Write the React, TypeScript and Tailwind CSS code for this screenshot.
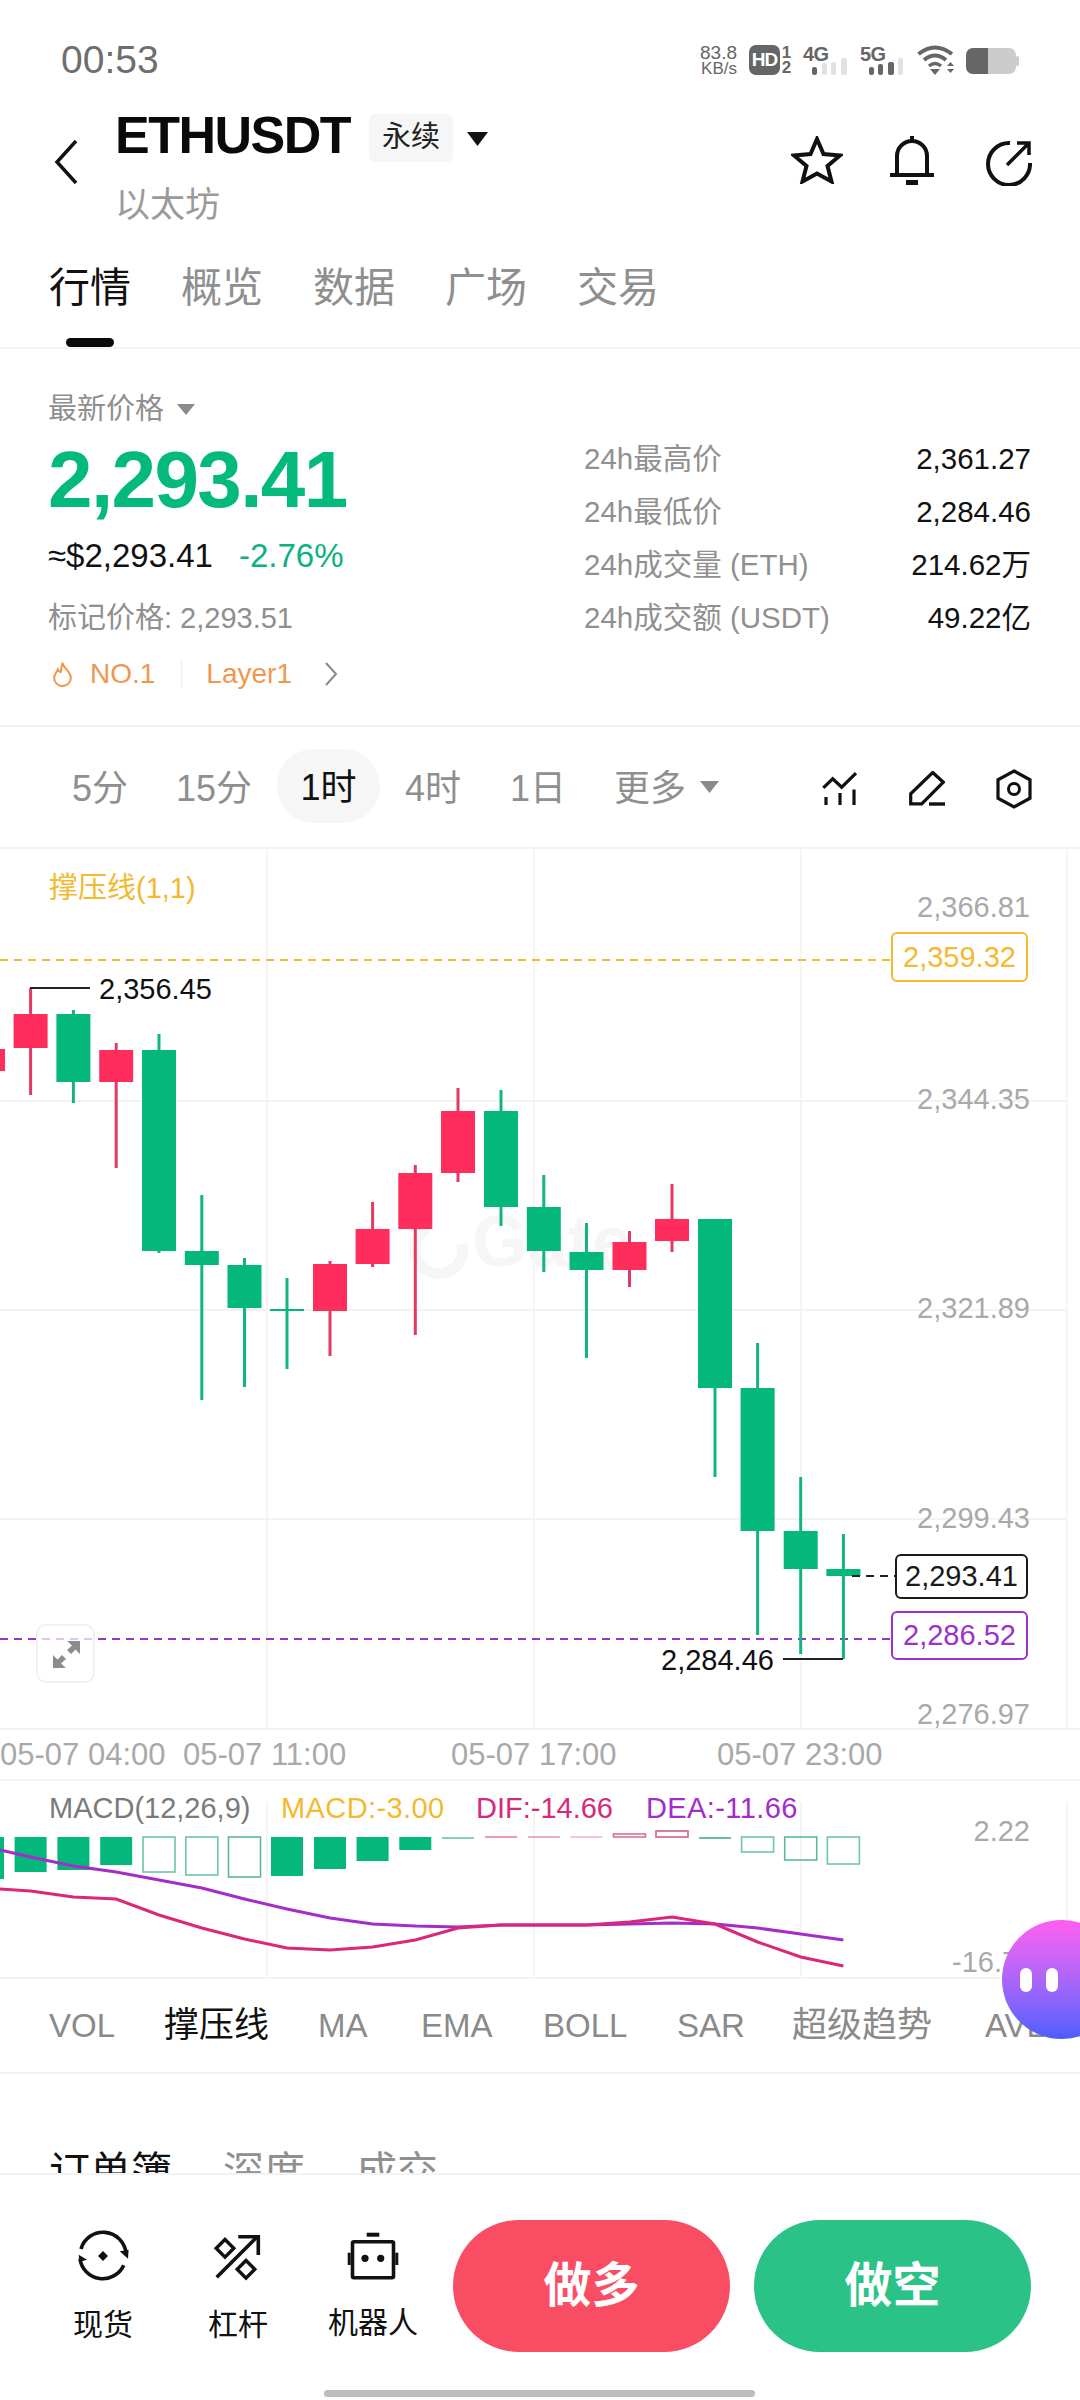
import type { ReactNode } from 'react'

const FONT = '"Liberation Sans","Noto Sans CJK SC",sans-serif'
const GREEN = '#04b87c'
const RED = '#ff2d5b'
const GREEN_WICK = '#12b582'
const RED_WICK = '#e23a63'
const YELLOW = '#f3b92f'

// x center, open top, body bottom, wick top, wick bottom
const xs = [30.6, 73.4, 116.2, 159, 201.8, 244.5, 287, 330, 372.6, 415.3, 458, 501, 543.8, 586.5, 629.5, 672, 715, 757.6, 800.7, 843.4]

const candles: { c: 'g' | 'r'; t: number; b: number; wt: number; wb: number }[] = [
  { c: 'r', t: 1014, b: 1048, wt: 988, wb: 1095 },
  { c: 'g', t: 1014, b: 1082, wt: 1010, wb: 1103 },
  { c: 'r', t: 1050, b: 1082, wt: 1043, wb: 1168 },
  { c: 'g', t: 1050, b: 1251, wt: 1034, wb: 1253 },
  { c: 'g', t: 1251, b: 1265, wt: 1195, wb: 1400 },
  { c: 'g', t: 1265, b: 1308, wt: 1258, wb: 1387 },
  { c: 'g', t: 1309, b: 1311, wt: 1278, wb: 1369 },
  { c: 'r', t: 1264, b: 1311, wt: 1261, wb: 1356 },
  { c: 'r', t: 1229, b: 1264, wt: 1202, wb: 1267 },
  { c: 'r', t: 1173, b: 1229, wt: 1165, wb: 1335 },
  { c: 'r', t: 1111, b: 1173, wt: 1088, wb: 1182 },
  { c: 'g', t: 1111, b: 1207, wt: 1090, wb: 1226 },
  { c: 'g', t: 1207, b: 1251, wt: 1175, wb: 1272 },
  { c: 'g', t: 1252, b: 1270, wt: 1223, wb: 1358 },
  { c: 'r', t: 1242, b: 1270, wt: 1231, wb: 1287 },
  { c: 'r', t: 1219, b: 1241, wt: 1184, wb: 1252 },
  { c: 'g', t: 1219, b: 1388, wt: 1219, wb: 1477 },
  { c: 'g', t: 1388, b: 1531, wt: 1343, wb: 1635 },
  { c: 'g', t: 1531, b: 1569, wt: 1477, wb: 1654 },
  { c: 'g', t: 1569, b: 1576, wt: 1534, wb: 1659 },
]

// macd bars: top y, bottom y, filled or hollow, colour
const bars: { t: number; b: number; fill: boolean; c: string }[] = [
  { t: 1835, b: 1870, fill: true, c: GREEN },
  { t: 1835, b: 1868, fill: true, c: GREEN },
  { t: 1835, b: 1863, fill: true, c: GREEN },
  { t: 1835, b: 1870, fill: false, c: '#6cc5a8' },
  { t: 1835, b: 1873, fill: false, c: '#6cc5a8' },
  { t: 1835, b: 1875, fill: false, c: '#5bb89a' },
  { t: 1835, b: 1874, fill: true, c: GREEN },
  { t: 1835, b: 1867, fill: true, c: GREEN },
  { t: 1835, b: 1859, fill: true, c: GREEN },
  { t: 1835, b: 1848, fill: true, c: GREEN },
  { t: 1836, b: 1836, fill: false, c: '#6cc5a8' },
  { t: 1835, b: 1835, fill: false, c: '#ec7f9f' },
  { t: 1835, b: 1835, fill: false, c: '#ec8fab' },
  { t: 1835, b: 1835, fill: false, c: '#f0b5c6' },
  { t: 1832, b: 1835, fill: false, c: '#dc6f92' },
  { t: 1829, b: 1835, fill: false, c: '#cf5f84' },
  { t: 1836, b: 1836, fill: false, c: '#3fb08c' },
  { t: 1835, b: 1850, fill: false, c: '#6cc5a8' },
  { t: 1835, b: 1858, fill: false, c: '#5bb89a' },
  { t: 1835, b: 1862, fill: false, c: '#6cc5a8' },
]

const dea = [1855, 1864, 1870, 1878, 1886, 1897, 1907, 1916, 1922, 1924, 1925, 1923, 1923, 1923, 1922, 1921, 1922, 1926, 1932, 1938]
const dif = [1889, 1895, 1897, 1913, 1926, 1937, 1946, 1948, 1945, 1938, 1926, 1923, 1923, 1923, 1920, 1915, 1922, 1940, 1955, 1964]

const toLine = (ys: number[], startY: number) =>
  `0,${startY} ` + ys.map((y, i) => `${xs[i]},${y}`).join(' ')

function Caret({ className, color }: { className: string; color: string }) {
  return (
    <svg viewBox="0 0 20 14" className={className} preserveAspectRatio="none">
      <polygon points="0,0 20,0 10,14" fill={color} />
    </svg>
  )
}

function PriceTag({ top, left, height, color, children }: { top: number; left: number; height: number; color: string; children: ReactNode }) {
  return (
    <div
      className="absolute right-[52px] flex items-center justify-center rounded-[6px] border-2 bg-white text-[29px] leading-none"
      style={{ top, left, height, borderColor: color, color }}
    >
      {children}
    </div>
  )
}

function AxisLabel({ top, children }: { top: number; children: ReactNode }) {
  return (
    <span className="absolute right-[50px] whitespace-nowrap text-[29px] leading-[28px] text-[#a9a9a9]" style={{ top }}>
      {children}
    </span>
  )
}

function StatusBar() {
  const dark = '#666666'
  const light = '#e2e2e2'
  return (
    <div className="flex h-[100px] items-start justify-between pl-[61px] pr-[60px] pt-[40px]">
      <span className="text-[39px] leading-[40px] text-[#6e6e6e]">00:53</span>
      <div className="mt-[5px] flex h-[30px] items-start text-[#666]">
        <div className="flex w-[40px] flex-col items-end leading-none">
          <span className="text-[19px] leading-[16px]">83.8</span>
          <span className="text-[17px] leading-[15px]">KB/s</span>
        </div>
        <div className="ml-[12px] flex h-[30px] w-[31px] items-center justify-center rounded-[7px] bg-[#666] text-[19px] font-bold tracking-[-1px] text-white">HD</div>
        <div className="ml-[1px] flex w-[11px] flex-col items-center text-[17px] font-bold leading-[15px]">
          <span>1</span>
          <span>2</span>
        </div>
        <div className="relative ml-[11px] h-[30px] w-[45px]">
          <span className="absolute left-0 top-[-1px] text-[20px] font-bold leading-[20px] tracking-[-0.5px]">4G</span>
          <svg viewBox="0 0 45 30" className="absolute inset-0 h-[30px] w-[45px]">
            <rect x="9" y="22" width="5" height="8" rx="2" fill={dark} />
            <rect x="19" y="18" width="5" height="12" rx="2" fill={light} />
            <rect x="28" y="17" width="5" height="13" rx="2" fill={light} />
            <rect x="38" y="13" width="6" height="17" rx="2" fill={light} />
          </svg>
        </div>
        <div className="relative ml-[12px] h-[30px] w-[45px]">
          <span className="absolute left-0 top-[-1px] text-[20px] font-bold leading-[20px] tracking-[-0.5px]">5G</span>
          <svg viewBox="0 0 45 30" className="absolute inset-0 h-[30px] w-[45px]">
            <rect x="9" y="22" width="5" height="8" rx="2" fill={dark} />
            <rect x="18" y="19" width="5" height="11" rx="2" fill={dark} />
            <rect x="28" y="17" width="6" height="13" rx="2" fill={dark} />
            <rect x="38" y="13" width="5" height="17" rx="2" fill={light} />
          </svg>
        </div>
        <svg viewBox="0 0 38 30" className="ml-[12px] h-[30px] w-[38px]">
          <path d="M1.5 9 Q18 -4 35 9" fill="none" stroke={dark} strokeWidth="4" />
          <path d="M7 15 Q18 6 29 15" fill="none" stroke={dark} strokeWidth="4" />
          <path d="M12 21 Q18 16 24 21" fill="none" stroke={dark} strokeWidth="3.5" />
          <polygon points="13,24 23,24 18,30" fill={dark} />
          <polygon points="30,17 37,17 33.5,21" transform="rotate(180 33.5 19)" fill={dark} />
          <polygon points="30,24 37,24 33.5,28" fill={dark} />
        </svg>
        <svg viewBox="0 0 54 26" className="ml-[11px] mt-[3px] h-[26px] w-[54px]">
          <rect x="0" y="0" width="50" height="26" rx="7" fill="#cccccc" />
          <path d="M7 0 H22 V26 H7 A7 7 0 0 1 0 19 V7 A7 7 0 0 1 7 0 Z" fill={dark} />
          <rect x="50" y="8" width="3" height="10" rx="1.5" fill="#cccccc" />
        </svg>
      </div>
    </div>
  )
}

function Header() {
  return (
    <div className="flex h-[140px] items-start">
      <svg viewBox="0 0 24 44" className="ml-[54px] mt-[40px] h-[44px] w-[24px]">
        <polyline points="22,1 3,22 22,43" fill="none" stroke="#111" strokeWidth="3.5" />
      </svg>
      <div className="ml-[37px] flex flex-col">
        <div className="flex items-start">
          <span className="mt-[5px] text-[52px] font-bold leading-[60px] tracking-[-1.5px] text-[#0a0a0a]">ETHUSDT</span>
          <span className="ml-[19px] mt-[14px] flex h-[48px] w-[84px] items-center justify-center rounded-[6px] bg-[#f6f6f6] text-[29px] text-[#222]">永续</span>
          <Caret className="ml-[14px] mt-[32px] h-[14px] w-[21px]" color="#111" />
        </div>
        <span className="mt-[18px] text-[35px] leading-[44px] text-[#9a9a9a]">以太坊</span>
      </div>
      <div className="ml-auto mr-[48px] mt-[36px] flex items-start">
        <svg viewBox="0 0 52 48" className="h-[48px] w-[52px]">
          <polygon points="26,3 32.5,18 49,19.5 36.5,30 40.5,45.5 26,37.5 11.5,45.5 15.5,30 3,19.5 19.5,18" fill="none" stroke="#111" strokeWidth="4" />
        </svg>
        <svg viewBox="0 0 44 50" className="ml-[47px] h-[50px] w-[44px]">
          <path d="M22 0 V4 M7 38 V20 a15 15 0 0 1 30 0 V38" fill="none" stroke="#111" strokeWidth="4" />
          <rect x="0" y="37" width="44" height="4" fill="#111" />
          <rect x="16" y="44" width="12" height="5" fill="#111" />
        </svg>
        <svg viewBox="0 0 46 46" className="ml-[52px] mt-[4px] h-[46px] w-[46px]">
          <path d="M24 3 A21 21 0 1 0 44 23" fill="none" stroke="#111" strokeWidth="4" />
          <path d="M21 25 L43 3 M31 3 H43 V15" fill="none" stroke="#111" strokeWidth="3.5" />
        </svg>
      </div>
    </div>
  )
}

function Tabs() {
  const items = ['行情', '概览', '数据', '广场', '交易']
  return (
    <div className="relative flex h-[109px] gap-[50px] border-b-2 border-[#f3f3f3] pl-[49px] pt-[23px]">
      {items.map((t, i) => (
        <span key={t} className={`text-[41px] leading-[50px] ${i === 0 ? 'text-[#111]' : 'text-[#8f8f8f]'}`}>
          {t}
        </span>
      ))}
      <div className="absolute bottom-0 left-[66px] h-[9px] w-[48px] rounded-full bg-[#0a0a0a]" />
    </div>
  )
}

function PriceBlock() {
  const stats = [
    ['24h最高价', '2,361.27'],
    ['24h最低价', '2,284.46'],
    ['24h成交量 (ETH)', '214.62万'],
    ['24h成交额 (USDT)', '49.22亿'],
  ]
  return (
    <div className="flex h-[378px] border-b-2 border-[#f3f3f3] pl-[48px] pr-[49px]">
      <div className="w-[536px] pt-[42px]">
        <div className="flex items-center">
          <span className="text-[29px] leading-[36px] text-[#8f8f8f]">最新价格</span>
          <Caret className="ml-[13px] h-[11px] w-[18px]" color="#8a8a8a" />
        </div>
        <div className="mt-[7px] text-[80px] font-bold leading-[92px] tracking-[-1.6px] text-[#03b97c]">2,293.41</div>
        <div className="mt-[10px] flex items-center text-[33px] leading-[40px]">
          <span className="text-[#111]">≈$2,293.41</span>
          <span className="ml-[26px] text-[#0ab37f]">-2.76%</span>
        </div>
        <div className="mt-[22px] text-[29px] leading-[40px] text-[#8f8f8f]">标记价格: 2,293.51</div>
        <div className="mt-[18px] flex items-center text-[28px] leading-[36px] text-[#f0974f]">
          <svg viewBox="0 0 24 28" className="ml-[3px] h-[26px] w-[23px]">
            <path d="M12 2 C13 8 21 11 21 18 A9 9 0 0 1 3 18 C3 14 6 12 7 9 C8 11 9 12 10 12 C11 9 11 5 12 2 Z" fill="none" stroke="#f0974f" strokeWidth="2.2" />
          </svg>
          <span className="ml-[16px]">NO.1</span>
          <span className="ml-[26px] h-[28px] w-[1px] bg-[#eeeeee]" />
          <span className="ml-[24px]">Layer1</span>
          <svg viewBox="0 0 14 24" className="ml-[32px] h-[24px] w-[14px]">
            <polyline points="2,1 12,12 2,23" fill="none" stroke="#8a8a8a" strokeWidth="2" />
          </svg>
        </div>
      </div>
      <div className="flex-1 pt-[84px]">
        {stats.map(([k, v]) => (
          <div key={k} className="flex h-[53px] items-center justify-between text-[29.5px]">
            <span className="text-[#909090]">{k}</span>
            <span className="text-[#111]">{v}</span>
          </div>
        ))}
      </div>
    </div>
  )
}

function IntervalBar() {
  return (
    <div className="flex h-[122px] items-center border-b-2 border-[#f3f3f3] pb-[2px] text-[36px] text-[#8f8f8f]">
      <span className="ml-[72px] w-[104px] pt-[6px]">5分</span>
      <span className="w-[101px] pt-[6px]">15分</span>
      <span className="flex h-[74px] w-[103px] items-center justify-center rounded-[37px] bg-[#f6f6f6] pt-[4px] text-[#111]">1时</span>
      <span className="ml-[25px] w-[105px] pt-[6px]">4时</span>
      <span className="w-[104px] pt-[6px]">1日</span>
      <span className="pt-[6px]">更多</span>
      <Caret className="ml-[14px] mt-[2px] h-[12px] w-[19px]" color="#8a8a8a" />
      <div className="ml-auto mr-[48px] flex items-center gap-[51px] pt-[5px]">
        <svg viewBox="0 0 36 36" className="h-[36px] w-[36px]">
          <polyline points="1.3,16.8 10.7,7.8 19.7,16.2 34,2.2" fill="none" stroke="#111" strokeWidth="3.2" />
          <path d="M4 26 V34 M18 22 V34 M32 18.5 V34" stroke="#111" strokeWidth="3.2" />
        </svg>
        <svg viewBox="0 0 36 36" className="h-[36px] w-[36px]">
          <polygon points="23.7,1.5 34.3,11.2 12.7,32.8 1.7,32.8 1.7,22.8" fill="none" stroke="#111" strokeWidth="3.2" />
          <path d="M20 33 H36" stroke="#111" strokeWidth="3.4" />
        </svg>
        <svg viewBox="0 0 36 40" className="h-[40px] w-[36px]">
          <polygon points="18,2 34,10.8 34,29.2 18,38 2,29.2 2,10.8" fill="none" stroke="#111" strokeWidth="3.2" />
          <circle cx="18" cy="20" r="5.5" fill="none" stroke="#111" strokeWidth="3" />
        </svg>
      </div>
    </div>
  )
}

function MainChart() {
  return (
    <div className="relative h-[879px] overflow-hidden">
      <svg viewBox="0 849 1080 879" className="absolute inset-0 h-[879px] w-[1080px]">
        {[267, 534, 801, 1067].map(x => (
          <line key={x} x1={x} x2={x} y1={849} y2={1728} stroke="#f5f5f5" strokeWidth="2" />
        ))}
        {[1101, 1310, 1519].map(y => (
          <line key={y} x1={0} x2={1067} y1={y} y2={y} stroke="#f3f3f3" strokeWidth="2" />
        ))}
        {/* watermark */}
        <path d="M428 1228 A24 24 0 1 0 462 1244" fill="none" stroke="#f6f6f6" strokeWidth="11" />
        <text x="472" y="1266" fontSize="72" fontWeight="700" fill="#f6f6f6">Gate</text>
        <line x1={0} x2={891} y1={960} y2={960} stroke={YELLOW} strokeWidth="2" strokeDasharray="8 6" />
        <line x1={0} x2={891} y1={1639} y2={1639} stroke="#9d32c9" strokeWidth="2" strokeDasharray="8 6" />
        {/* partly hidden candle at the left edge */}
        <rect x={0} y={1049} width={5} height={22} fill={RED} />
        {candles.map((k, i) => (
          <g key={i}>
            <rect x={xs[i] - 1.5} y={k.wt} width={3} height={k.wb - k.wt} fill={k.c === 'g' ? GREEN_WICK : RED_WICK} />
            <rect x={xs[i] - 17} y={k.t} width={34} height={k.b - k.t} fill={k.c === 'g' ? GREEN : RED} />
          </g>
        ))}
        <path d="M30 988 H90" stroke="#222" strokeWidth="2" />
        <path d="M783 1659 H843" stroke="#222" strokeWidth="2" />
        <line x1={852} x2={895} y1={1576} y2={1576} stroke="#222" strokeWidth="2" strokeDasharray="8 6" />
      </svg>

      <span className="absolute left-[49px] top-[22px] text-[29px] leading-[34px] text-[#f3b92f]">撑压线(1,1)</span>

      <AxisLabel top={44}>2,366.81</AxisLabel>
      <AxisLabel top={236}>2,344.35</AxisLabel>
      <AxisLabel top={445}>2,321.89</AxisLabel>
      <AxisLabel top={655}>2,299.43</AxisLabel>
      <AxisLabel top={851}>2,276.97</AxisLabel>

      <PriceTag top={83} left={891} height={50} color={YELLOW}>2,359.32</PriceTag>
      <PriceTag top={705} left={895} height={45} color="#1a1a1a">2,293.41</PriceTag>
      <PriceTag top={762} left={891} height={49} color="#9d32c9">2,286.52</PriceTag>

      <span className="absolute left-[99px] top-[123px] text-[29px] leading-[34px] text-[#111]">2,356.45</span>
      <span className="absolute left-[661px] top-[794px] text-[29px] leading-[34px] text-[#111]">2,284.46</span>

      {/* expand button */}
      <div className="absolute left-[36px] top-[775px] flex h-[59px] w-[59px] items-center justify-center rounded-[10px] border-2 border-[#f1f1f1] bg-white/70">
        <svg viewBox="0 0 30 30" className="h-[30px] w-[30px]">
          <path d="M2 29 V16 L6.5 20.5 L11 16 L15 20 L10 24.5 L15 29 Z M29 2 V15 L24.5 10.5 L20 15 L16 11 L21 6.5 L16 2 Z" fill="#8c8c8c" />
        </svg>
      </div>
    </div>
  )
}

function TimeAxis() {
  const labels = [
    ['05-07 04:00', 'w-[183px]'],
    ['05-07 11:00', 'w-[268px]'],
    ['05-07 17:00', 'w-[266px]'],
    ['05-07 23:00', ''],
  ]
  return (
    <div className="flex h-[51px] items-start border-t-2 border-[#f3f3f3] pt-[7px] text-[31px] leading-[36px] text-[#a9a9a9]">
      {labels.map(([t, w]) => (
        <span key={t} className={`whitespace-nowrap ${w}`}>{t}</span>
      ))}
    </div>
  )
}

function MacdPanel() {
  return (
    <div className="relative h-[198px] overflow-hidden border-t-2 border-[#f3f3f3]">
      <svg viewBox="0 1779 1080 198" className="absolute inset-0 h-[198px] w-[1080px]">
        {[267, 534, 801, 1067].map(x => (
          <line key={x} x1={x} x2={x} y1={1800} y2={1977} stroke="#f5f5f5" strokeWidth="2" />
        ))}
        <rect x={0} y={1835} width={4} height={42} fill={GREEN} />
        {bars.map((b, i) =>
          b.fill ? (
            <rect key={i} x={xs[i] - 16} y={b.t} width={32} height={b.b - b.t} fill={b.c} />
          ) : b.b === b.t ? (
            <line key={i} x1={xs[i] - 16} x2={xs[i] + 16} y1={b.t} y2={b.t} stroke={b.c} strokeWidth="1.6" />
          ) : (
            <rect key={i} x={xs[i] - 16} y={b.t} width={32} height={b.b - b.t} fill="none" stroke={b.c} strokeWidth="1.6" />
          ),
        )}
        <polyline points={toLine(dea, 1848)} fill="none" stroke="#a32dc9" strokeWidth="3" />
        <polyline points={toLine(dif, 1887)} fill="none" stroke="#dc2779" strokeWidth="3" />
      </svg>
      <div className="absolute left-[49px] top-[10px] flex text-[29px] leading-[34px]">
        <span className="w-[232px] text-[#7a7a7a]">MACD(12,26,9)</span>
        <span className="w-[195px] tracking-[0.4px] text-[#f3b92f]">MACD:-3.00</span>
        <span className="w-[170px] text-[#d6297b]">DIF:-14.66</span>
        <span className="tracking-[0.4px] text-[#a32dc9]">DEA:-11.66</span>
      </div>
      <span className="absolute right-[50px] top-[33px] text-[29px] leading-[34px] text-[#a9a9a9]">2.22</span>
      <span className="absolute left-[952px] top-[167px] text-[29px] leading-[28px] text-[#a9a9a9]">-16.76</span>
    </div>
  )
}

function IndicatorTabs() {
  const items = [
    ['VOL', 'w-[115px]'],
    ['撑压线', 'w-[154px] text-[35px] text-[#111]'],
    ['MA', 'w-[103px]'],
    ['EMA', 'w-[122px]'],
    ['BOLL', 'w-[134px]'],
    ['SAR', 'w-[115px]'],
    ['超级趋势', 'w-[193px] text-[35px]'],
    ['AVL', ''],
  ]
  return (
    <div className="flex h-[97px] items-center overflow-hidden whitespace-nowrap border-t-2 border-b-2 border-t-[#f3f3f3] border-b-[#f3f3f3] pl-[49px] text-[33px] text-[#8a8a8a]">
      {items.map(([t, w]) => (
        <span key={t} className={`shrink-0 ${w}`}>{t}</span>
      ))}
    </div>
  )
}

function BookTabs() {
  return (
    <div className="flex h-[99px] items-start gap-[51px] overflow-hidden pl-[49px] pt-[73px] text-[41px] leading-[50px] text-[#8f8f8f]">
      <span className="text-[#111]">订单簿</span>
      <span>深度</span>
      <span>成交</span>
    </div>
  )
}

function BottomBar() {
  const iconBtn = 'flex flex-col items-center text-[30px] leading-[34px] text-[#111]'
  return (
    <div className="relative h-[227px] border-t-2 border-[#f3f3f3] bg-white">
      <div className="flex items-start pl-[49px] pr-[49px] pt-[45px]">
        <div className={`${iconBtn} w-[108px]`}>
          <svg viewBox="0 0 54 54" className="mt-[9px] h-[54px] w-[54px]">
            <path d="M5 20 A23 23 0 0 1 50 24" fill="none" stroke="#111" strokeWidth="3.6" />
            <path d="M47.7 36.3 A23 23 0 0 1 4 30" fill="none" stroke="#111" strokeWidth="3.6" />
            <polygon points="27,22 32,27 27,32 22,27" fill="#111" />
            <polygon points="43.7,22.3 52.6,20.7 52,29.7" fill="#111" />
            <polygon points="2.7,25.7 11,30.7 3.3,33" fill="#111" />
          </svg>
          <span className="mt-[25px] whitespace-nowrap">现货</span>
        </div>
        <div className={`${iconBtn} ml-[52px] w-[58px]`}>
          <svg viewBox="0 0 50 50" className="mt-[11px] h-[50px] w-[50px]">
            <path d="M3.7 46.3 L43.7 6.3" fill="none" stroke="#111" strokeWidth="3.6" />
            <polyline points="25.3,5.7 45.3,5.7 45.3,24" fill="none" stroke="#111" strokeWidth="3.6" />
            <polygon points="12,8.5 20.8,17.3 12,26.1 3.2,17.3" fill="none" stroke="#111" strokeWidth="3.4" />
            <polygon points="33,29.5 41.8,38.3 33,47.1 24.2,38.3" fill="none" stroke="#111" strokeWidth="3.4" />
          </svg>
          <span className="mt-[27px] whitespace-nowrap">杠杆</span>
        </div>
        <div className={`${iconBtn} ml-[62px] w-[88px]`}>
          <svg viewBox="0 0 52 52" className="mt-[9px] h-[52px] w-[52px]">
            <rect x="19.7" y="3.7" width="12.6" height="4" fill="#111" />
            <rect x="5.5" y="12.7" width="41" height="36" rx="1.5" fill="none" stroke="#111" strokeWidth="3.6" />
            <rect x="0.7" y="23.7" width="3" height="12.3" fill="#111" />
            <rect x="48.3" y="23.7" width="3" height="12.3" fill="#111" />
            <circle cx="18" cy="29.3" r="3.6" fill="#111" />
            <circle cx="33.7" cy="29.3" r="3.6" fill="#111" />
          </svg>
          <span className="mt-[25px] whitespace-nowrap">机器人</span>
        </div>
        <div className="ml-[36px] flex h-[132px] w-[277px] shrink-0 items-center justify-center rounded-full bg-[#f94d63] text-[48px] font-bold text-white">做多</div>
        <div className="ml-[24px] flex h-[132px] w-[277px] shrink-0 items-center justify-center rounded-full bg-[#2bc287] text-[48px] font-bold text-white">做空</div>
      </div>
      <div className="absolute bottom-[3px] left-[324px] h-[7px] w-[431px] rounded-full bg-[#bdbdbd]" />
    </div>
  )
}

export default function App() {
  return (
    <div className="relative h-[2400px] w-[1080px] overflow-hidden bg-white" style={{ fontFamily: FONT }}>
      <StatusBar />
      <Header />
      <Tabs />
      <PriceBlock />
      <IntervalBar />
      <MainChart />
      <TimeAxis />
      <MacdPanel />
      <IndicatorTabs />
      <BookTabs />
      <BottomBar />

      {/* floating assistant */}
      <div className="absolute left-[1002px] top-[1920px] flex h-[119px] w-[120px] items-center gap-[14px] rounded-[60px] bg-gradient-to-b from-[#ff5df0] to-[#4d5cff] pl-[18px]">
        <span className="h-[24px] w-[12px] rounded-full bg-white" />
        <span className="h-[24px] w-[12px] rounded-full bg-white" />
      </div>
    </div>
  )
}
